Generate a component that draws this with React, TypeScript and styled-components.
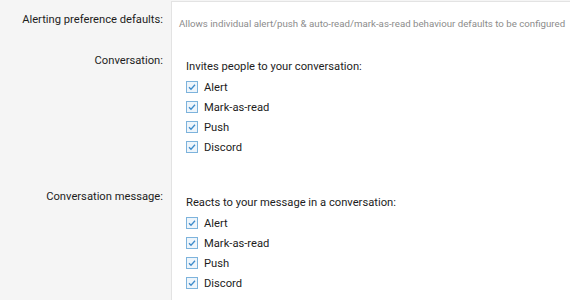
import * as React from 'react'
import styled, {createGlobalStyle} from 'styled-components'

const GlobalStyle = createGlobalStyle`
  html, body {
    margin: 0;
    padding: 0;
    background: #f5f5f5;
  }
  body {
    font-family: Roboto, "Noto Sans", sans-serif;
    color: #1d1d1d;
  }
`

const Page = styled.div`
  height: 300px;
  overflow: hidden;
  background: linear-gradient(to right, #f5f5f5 171px, #e3e3e3 171px, #e3e3e3 172px, #fff 172px);
  border-top: 1px solid #f5f5f5;
  box-sizing: border-box;
`

const TopLine = styled.div`
  margin-left: 172px;
  height: 1px;
  background: #e3e3e3;
`

const Rows = styled.dl`
  margin: 0;
`

const Row = styled.div<{$first?: boolean}>`
  display: grid;
  grid-template-columns: 171px 1fr;
  padding: 8px 0 ${p => (p.$first ? 9 : 8)}px;
`

const Label = styled.dt`
  margin: 0;
  padding-right: 8px;
  text-align: right;
  font-size: 11.2px;
  line-height: 20px;
  white-space: nowrap;
`

const Value = styled.dd<{$offset: number}>`
  margin: 0;
  padding: ${p => p.$offset}px 0 0 ${p => (p.$offset === 4 ? 8 : 15)}px;
`

const Description = styled.div`
  font-size: 9.7px;
  line-height: 20px;
  color: #8c8c8c;
  white-space: nowrap;
`

const Hint = styled.div`
  font-size: 11.2px;
  line-height: 20px;
`

const List = styled.ul`
  list-style: none;
  margin: 0 0 14px;
  padding: 0;
`

const Item = styled.li`
  display: flex;
  align-items: center;
  gap: 6px;
  height: 20px;
  font-size: 11.2px;
`

const Box = () => (
  <svg width="12" height="12" viewBox="0 0 12 12">
    <rect x="0.5" y="0.5" width="11" height="11" fill="#eef5fb" stroke="#7db3dc"/>
    <path d="M3 6.2 L5 8.2 L9 3.8" fill="none" stroke="#3f8ccb" strokeWidth="1.3"/>
  </svg>
)

const options = ['Alert', 'Mark-as-read', 'Push', 'Discord']

const sections = [
  {label: 'Conversation:', hint: 'Invites people to your conversation:'},
  {label: 'Conversation message:', hint: 'Reacts to your message in a conversation:'},
]

export default function App() {
  return (
    <>
      <GlobalStyle/>
      <Page>
        <TopLine/>
        <Rows>
          <Row $first>
            <Label>Alerting preference defaults:</Label>
            <Value $offset={4}>
              <Description>
                Allows individual alert/push &amp; auto-read/mark-as-read behaviour defaults to be configured
              </Description>
            </Value>
          </Row>
          {sections.map(s => (
            <Row key={s.label}>
              <Label>{s.label}</Label>
              <Value $offset={6}>
                <Hint>{s.hint}</Hint>
                <List>
                  {options.map(o => (
                    <Item key={o}><Box/>{o}</Item>
                  ))}
                </List>
              </Value>
            </Row>
          ))}
        </Rows>
      </Page>
    </>
  )
}
